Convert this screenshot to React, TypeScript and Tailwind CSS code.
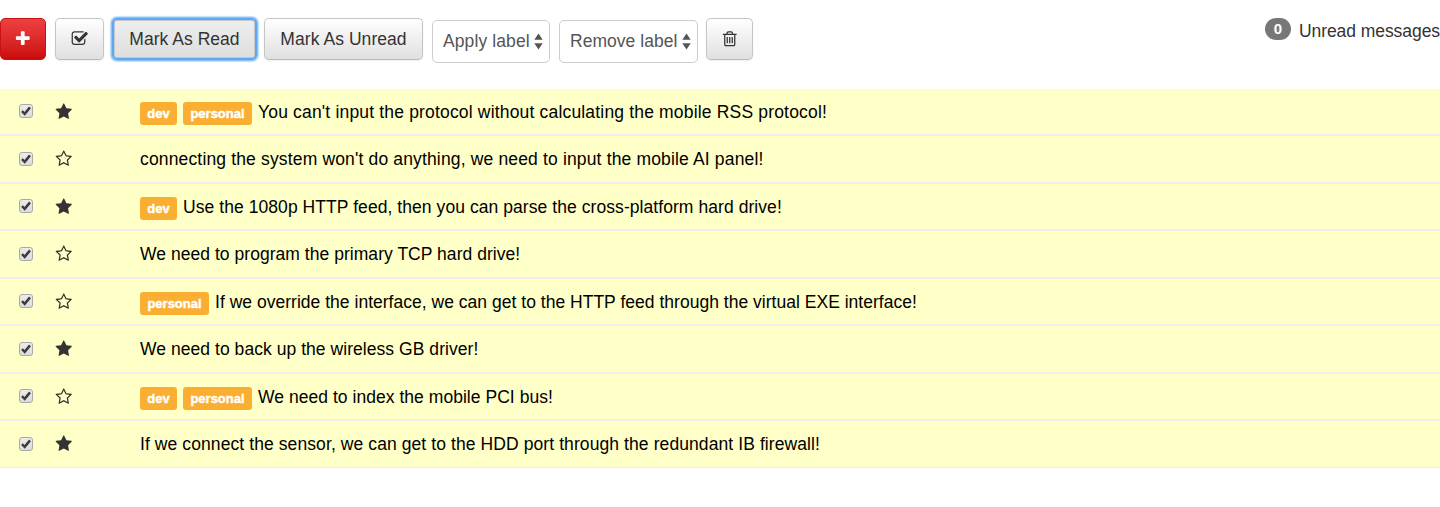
import type { ReactNode } from 'react'

const PATHS = {
  plus: 'M1600 736v192q0 40-28 68t-68 28h-416v416q0 40-28 68t-68 28h-192q-40 0-68-28t-28-68v-416h-416q-40 0-68-28t-28-68v-192q0-40 28-68t68-28h416v-416q0-40 28-68t68-28h192q40 0 68 28t28 68v416h416q40 0 68 28t28 68z',
  check: 'M1472 930v318q0 119-84.5 203.5t-203.5 84.5h-832q-119 0-203.5-84.5t-84.5-203.5v-832q0-119 84.5-203.5t203.5-84.5h832q63 0 117 25 15 7 18 23 3 17-9 29l-49 49q-10 10-23 10-3 0-9-2-23-6-45-6h-832q-66 0-113 47t-47 113v832q0 66 47 113t113 47h832q66 0 113-47t47-113v-254q0-13 9-22l64-64q10-10 23-10 6 0 12 3 20 8 20 29zm231-489l-814 814q-24 24-57 24t-57-24l-430-430q-24-24-24-57t24-57l110-110q24-24 57-24t57 24l263 263 647-647q24-24 57-24t57 24l110 110q24 24 24 57t-24 57z',
  trash: 'M704 736v576q0 14-9 23t-23 9h-64q-14 0-23-9t-9-23v-576q0-14 9-23t23-9h64q14 0 23 9t9 23zm256 0v576q0 14-9 23t-23 9h-64q-14 0-23-9t-9-23v-576q0-14 9-23t23-9h64q14 0 23 9t9 23zm256 0v576q0 14-9 23t-23 9h-64q-14 0-23-9t-9-23v-576q0-14 9-23t23-9h64q14 0 23 9t9 23zm128 724v-948h-896v948q0 22 7 40.5t14.5 27 10.5 8.5h832q3 0 10.5-8.5t14.5-27 7-40.5zm-672-1076h448l-48-117q-7-9-17-11h-317q-10 2-17 11zm928 32v64q0 14-9 23t-23 9h-96v948q0 83-47 143.5t-113 60.5h-832q-66 0-113-58.5t-47-141.5v-952h-96q-14 0-23-9t-9-23v-64q0-14 9-23t23-9h309l70-167q15-37 54-63t79-26h320q40 0 79 26t54 63l70 167h309q14 0 23 9t9 23z',
  star: 'M1728 647q0 22-26 48l-363 354 86 500q1 7 1 20 0 21-10.5 35.5t-30.5 14.5q-19 0-40-12l-449-236-449 236q-22 12-40 12-21 0-31.5-14.5t-10.5-35.5q0-6 2-20l86-500-364-354q-25-27-25-48 0-37 56-46l502-73 225-455q19-41 49-41t49 41l225 455 502 73q56 9 56 46z',
  starOutline: 'M1201 1004l306-297-422-62-189-382-189 382-422 62 306 297-73 421 378-199 377 199zm527-357q0 22-26 48l-363 354 86 500q1 7 1 20 0 50-41 50-19 0-40-12l-449-236-449 236q-22 12-40 12-21 0-31.5-14.5t-10.5-35.5q0-6 2-20l86-500-364-354q-25-27-25-48 0-37 56-46l502-73 225-455q19-41 49-41t49 41l225 455 502 73q56 9 56 46z',
}

function Icon({ name, className = '' }: { name: keyof typeof PATHS; className?: string }) {
  return (
    <svg viewBox="0 0 1792 1792" fill="currentColor" className={`size-[17.5px] shrink-0 ${className}`}>
      <path d={PATHS[name]} />
    </svg>
  )
}

const BASE = 'flex h-[42px] shrink-0 items-center justify-center rounded-[5px] whitespace-nowrap'
const PLAIN =
  'border border-[#c5c5c5] border-b-[#b9b9b9] bg-linear-to-b from-white to-[#e0e0e0] shadow-[0_1px_2px_rgba(0,0,0,0.08)]'

function Button({ className, label, children }: { className: string; label?: string; children: ReactNode }) {
  return (
    <button type="button" aria-label={label} className={`${BASE} ${className}`}>
      {children}
    </button>
  )
}

function LabelSelect({ text, className }: { text: string; className: string }) {
  return (
    <button
      type="button"
      className={`mt-[2px] flex h-[43px] shrink-0 items-center justify-between rounded-[5px] border border-[#ccc] bg-white pr-[6px] pl-[10px] whitespace-nowrap text-[#555] ${className}`}
    >
      <span className="pb-[2px]">{text}</span>
      <svg viewBox="0 0 9 17" fill="#555" className="h-[17px] w-[9px]">
        <path d="M4.5 0.5L8.7 6.8H0.3zM4.5 16.5L0.3 10.2H8.7z" />
      </svg>
    </button>
  )
}

function Checkbox() {
  return (
    <span
      role="checkbox"
      aria-checked="true"
      className="flex size-[14px] shrink-0 items-center justify-center rounded-[3px] border border-[#a9a9a9] bg-linear-to-b from-[#ececec] to-[#dcdcdc]"
    >
      <svg viewBox="0 0 12 12" fill="none" stroke="#3c3c3c" strokeWidth="2.5" className="size-[12px]">
        <path d="M2 6.2L4.7 8.8L10 2.4" />
      </svg>
    </span>
  )
}

const LABEL_WIDTHS: Record<string, string> = { dev: 'w-[37px]', personal: 'w-[69px]' }

type Message = { starred: boolean; labels: string[]; subject: string; track: string }

const MESSAGES: Message[] = [
  { starred: true, labels: ['dev', 'personal'], subject: "You can't input the protocol without calculating the mobile RSS protocol!", track: 'tracking-[0.175px]' },
  { starred: false, labels: [], subject: "connecting the system won't do anything, we need to input the mobile AI panel!", track: 'tracking-[0.155px]' },
  { starred: true, labels: ['dev'], subject: 'Use the 1080p HTTP feed, then you can parse the cross-platform hard drive!', track: 'tracking-[0.065px]' },
  { starred: false, labels: [], subject: 'We need to program the primary TCP hard drive!', track: 'tracking-[0.04px]' },
  { starred: false, labels: ['personal'], subject: 'If we override the interface, we can get to the HTTP feed through the virtual EXE interface!', track: 'tracking-[0.02px]' },
  { starred: true, labels: [], subject: 'We need to back up the wireless GB driver!', track: 'tracking-[0.05px]' },
  { starred: false, labels: ['dev', 'personal'], subject: 'We need to index the mobile PCI bus!', track: 'tracking-[0.04px]' },
  { starred: true, labels: [], subject: 'If we connect the sensor, we can get to the HDD port through the redundant IB firewall!', track: 'tracking-[0.09px]' },
]

function Row({ message }: { message: Message }) {
  return (
    <div className="group flex items-start border-y border-[#eee] bg-[#ffffc8] pt-[10px] pl-[19px] first:border-t-white odd:h-[47px] even:h-[48px]">
      <div className="mt-[5px] flex w-[36px] shrink-0 group-even:mt-[6px]">
        <Checkbox />
      </div>
      <div className="mt-[4px] w-[85px] shrink-0 text-[#333]">
        <Icon name={message.starred ? 'star' : 'starOutline'} />
      </div>
      <div className="flex items-start">
        {message.labels.map((label) => (
          <span
            key={label}
            className={`mt-[3px] mr-[6px] flex h-[23px] items-center justify-center rounded-[3px] bg-[#fbaf32] text-[13px] leading-[23px] font-bold text-white [-webkit-text-stroke:0.4px_white] ${LABEL_WIDTHS[label]}`}
          >
            {label}
          </span>
        ))}
        <span className={`leading-[26px] whitespace-nowrap text-black ${message.track}`}>{message.subject}</span>
      </div>
    </div>
  )
}

export default function App() {
  return (
    <div className="h-[507px] w-full overflow-hidden bg-white font-['Liberation_Sans',Arial,sans-serif] text-[17.5px] leading-[26px] text-[#333]">
      <header className="flex h-[88px] items-start pt-[18px]">
        <Button label="Compose" className="w-[46px] border border-[#c11] bg-linear-to-b from-[#ee4040] to-[#cb0808] text-white">
          <Icon name="plus" />
        </Button>
        <Button label="Select all" className={`ml-[9px] w-[49px] ${PLAIN}`}>
          <Icon name="check" />
        </Button>
        <Button className="ml-[8px] w-[145px] border-2 border-[#5ea7f3] bg-linear-to-b from-[#eee] to-[#dedede] shadow-[0_0_0_1px_#8dc2f9,0_0_1px_2px_#c0defc,inset_0_0_0_1px_#c4c8cc]">
          <span className="tracking-[0.03px]">Mark As Read</span>
        </Button>
        <Button className={`ml-[7px] w-[159px] ${PLAIN}`}>
          <span className="tracking-[0.06px]">Mark As Unread</span>
        </Button>
        <LabelSelect text="Apply label" className="ml-[9px] w-[118px] tracking-[0.1px]" />
        <LabelSelect text="Remove label" className="ml-[9px] w-[139px] tracking-[0.03px]" />
        <Button label="Delete" className={`ml-[8px] w-[47px] ${PLAIN}`}>
          <Icon name="trash" />
        </Button>
        <div className="ml-auto flex items-start whitespace-nowrap">
          <span className="mr-[8px] flex h-[22px] w-[26px] items-center justify-center rounded-full bg-[#777] text-[15px] font-bold text-white">
            0
          </span>
          <span className="tracking-[-0.06px]">Unread messages</span>
        </div>
      </header>
      <main>
        {MESSAGES.map((message) => (
          <Row key={message.subject} message={message} />
        ))}
      </main>
    </div>
  )
}
